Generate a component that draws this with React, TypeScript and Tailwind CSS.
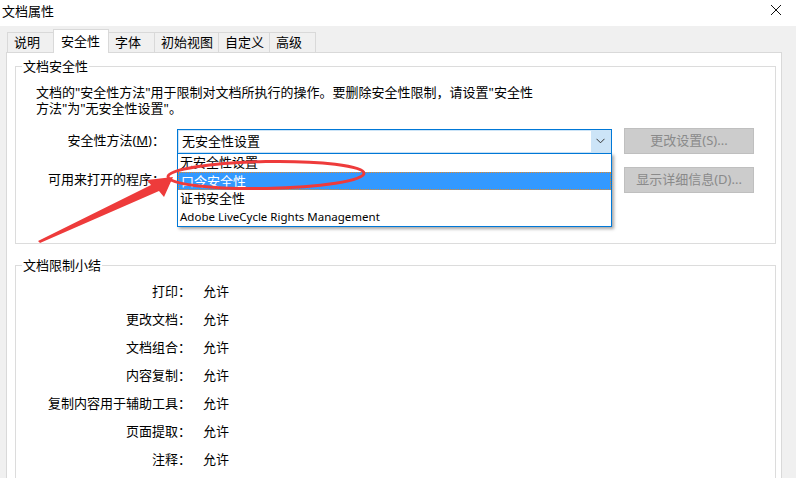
import React from "react";

const FONT = '"Noto Sans", "Noto Sans CJK SC", sans-serif';

const tabs = [
  { label: "说明", w: "w-[47px]" },
  { label: "安全性", w: "w-[56px]", active: true },
  { label: "字体", w: "w-[47px]" },
  { label: "初始视图", w: "w-[65px]" },
  { label: "自定义", w: "w-[52px]" },
  { label: "高级", w: "w-[47px]" },
];

const summary = [
  "打印",
  "更改文档",
  "文档组合",
  "内容复制",
  "复制内容用于辅助工具",
  "页面提取",
  "注释",
];

export default function App() {
  return (
    <div
      className="relative w-[796px] h-[478px] overflow-hidden bg-[#f0f0f0] text-[13px] text-black"
      style={{ fontFamily: FONT }}
    >
      {/* title bar */}
      <div className="h-[26px] bg-white flex items-center justify-between">
        <span className="pl-[2px] leading-[17px] -mt-[4px]">文档属性</span>
        <svg width="12" height="12" viewBox="0 0 12 12" className="mr-[14px] -mt-[6px]">
          <path d="M1 1 L11 11 M11 1 L1 11" stroke="#111" strokeWidth="1" fill="none" />
        </svg>
      </div>

      <div className="pl-[6px]">
        {/* tabs */}
        <div className="flex items-end h-[27px] pt-[3px]">
          {tabs.map((t, i) => (
            <div
              key={t.label}
              className={
                t.active
                  ? `${t.w} -ml-[1px] relative z-10 h-[24px] bg-white border-l border-t border-r border-[#d9d9d9] pl-[7px] leading-[22px]`
                  : `${t.w} ${i === 0 ? "ml-[1px]" : "-ml-[1px]"} h-[20px] mb-[1px] bg-[#f0f0f0] border-l border-t border-r border-[#d9d9d9] pl-[6px] leading-[19px]`
              }
            >
              {t.label}
            </div>
          ))}
        </div>

        {/* panel */}
        <div className="-mt-[1px] w-[776px] h-[440px] bg-white border border-[#d9d9d9] pl-[8px] pt-[5px]">
          {/* group 1 */}
          <fieldset className="w-[761px] h-[186px] border border-[#dcdcdc]">
            <legend className="ml-[6px] px-[1px] leading-[17px]">文档安全性</legend>
            <p className="pl-[20px] mt-[9px] leading-[16px] whitespace-nowrap">
              文档的"安全性方法"用于限制对文档所执行的操作。要删除安全性限制，请设置"安全性
              <br />
              方法"为"无安全性设置"。
            </p>

            <div className="mt-[12px] flex items-center h-[26px]">
              <div className="w-[149px] text-right whitespace-nowrap">
                安全性方法(<span className="underline">M</span>)：
              </div>
              <div className="relative ml-[12px] w-[435px] h-[25px] border border-[#0078d7] bg-[#cce4f7] p-[1px] flex">
                <div className="flex-1 bg-white pl-[3px] leading-[20px]">无安全性设置</div>
                <div className="w-[19px] flex items-center justify-center">
                  <svg width="9" height="6" viewBox="0 0 9 6">
                    <path d="M0.5 0.8 L4.5 4.8 L8.5 0.8" stroke="#333" strokeWidth="1" fill="none" />
                  </svg>
                </div>

                {/* dropdown list */}
                <div className="absolute left-[-1px] top-[23px] w-[435px] h-[74px] bg-white border border-[#0078d7] shadow-[2px_2px_3px_rgba(0,0,0,0.35)] z-20">
                  <div className="h-[18px] pl-[2px] leading-[16px]">无安全性设置</div>
                  <div className="h-[18px] pl-[2px] leading-[16px] bg-[#3399ff] text-white border border-dotted border-[#e08a2c]">
                    口令安全性
                  </div>
                  <div className="h-[18px] pl-[2px] leading-[17px]">证书安全性</div>
                  <div className="h-[18px] pl-[2px] leading-[17px] text-[11.5px]">
                    Adobe LiveCycle Rights Management
                  </div>
                </div>
              </div>
              <div className="ml-[12px] w-[130px] h-[26px] bg-[#cccccc] border border-[#bfbfbf] text-[#8a8a8a] flex items-center justify-center">
                更改设置(S)...
              </div>
            </div>

            <div className="mt-[13px] flex items-center h-[26px]">
              <div className="w-[149px] text-right whitespace-nowrap">可用来打开的程序：</div>
              <div className="ml-[12px] w-[435px]" />
              <div className="ml-[12px] w-[130px] h-[26px] bg-[#cccccc] border border-[#bfbfbf] text-[#8a8a8a] flex items-center justify-center">
                显示详细信息(D)...
              </div>
            </div>
          </fieldset>

          {/* group 2 */}
          <fieldset className="mt-[13px] w-[761px] h-[260px] border border-[#dcdcdc]">
            <legend className="ml-[6px] px-[1px] leading-[17px]">文档限制小结</legend>
            <div className="mt-[4px]">
              {summary.map((s) => (
                <div key={s} className="flex items-center h-[28px]">
                  <div className="w-[175px] text-right whitespace-nowrap">{s}：</div>
                  <div className="ml-[12px]">允许</div>
                </div>
              ))}
            </div>
          </fieldset>
        </div>
      </div>

      {/* red annotation */}
      <svg
        className="absolute left-0 top-0 pointer-events-none z-30"
        width="796"
        height="478"
        viewBox="0 0 796 478"
      >
        <ellipse
          cx="266"
          cy="175"
          rx="98"
          ry="13.5"
          fill="none"
          stroke="#ee3b3b"
          strokeWidth="3"
          transform="rotate(-1 266 175)"
        />
        <polygon
          points="38,241 151,185 147,180 173,177 164,197 159,191 40,243"
          fill="#ee3b3b"
        />
      </svg>
    </div>
  );
}
